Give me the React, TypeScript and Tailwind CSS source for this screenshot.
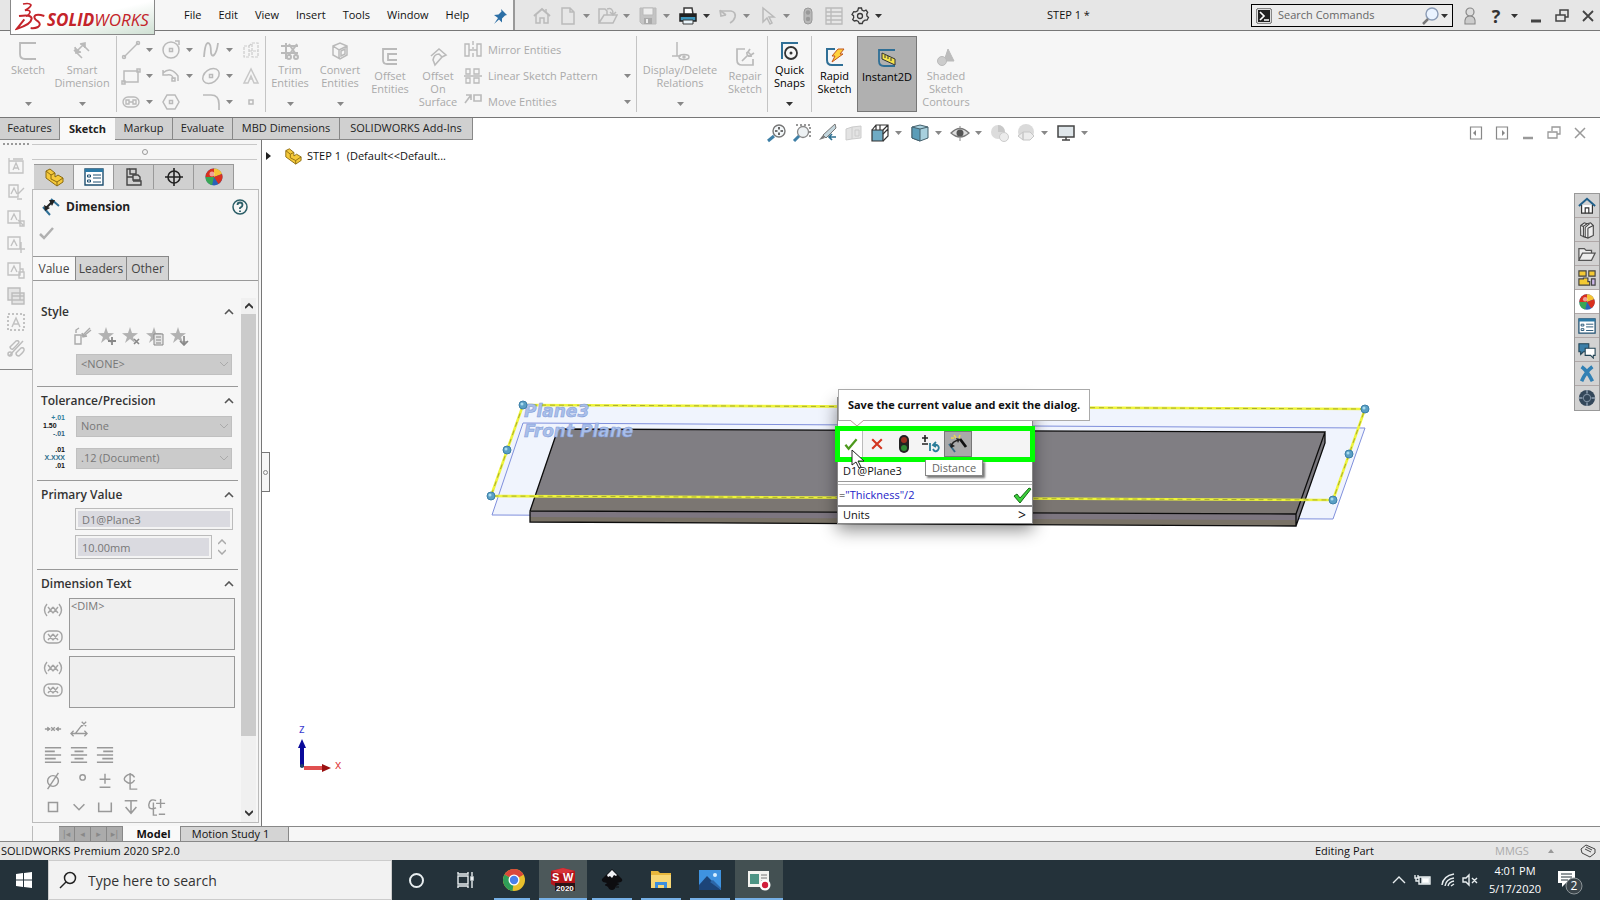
import type { ReactNode } from 'react'

const G = '#bababa'
const D = '#3a3a3a'
const B = '#2f6f96'

// every drawing sits on a 20x20 grid
const icons: Record<string, ReactNode> = {
  home: <g stroke={G} strokeWidth="1.5"><path d="M2 10 10 3l8 7" strokeWidth="2" /><path d="M4 9v8h4v-5h4v5h4V9M14 3v3" /></g>,
  newDoc: <path stroke={G} strokeWidth="1.5" d="M4 2h8l4 4v12H4zM12 2v4h4" />,
  open: <g stroke={G} strokeWidth="1.5"><path d="M1 17V3h6l2 2v4M1 17l5-8h13l-4 8z" /><path d="M9 3q6-2 6 5M12 6l3 3 3-3" /></g>,
  save: <g><path d="M2 2h16v16H4l-2-2z" fill="#c4c4c4" stroke={G} /><path d="M5 2h10v7H5z" fill="#eee" stroke={G} /><path d="M6 12h8v6H6z" fill="#aaa" /><path d="M8 13h2v4H8z" fill="#eee" /></g>,
  print: <g><path d="M6 8V2h8l1 6" stroke={D} strokeWidth="1.5" fill="#fff" /><path d="M2 8h16v7H2z" fill="#3c94ba" stroke="#202020" strokeWidth="1.5" /><path d="M2 8h16v3H2z" fill="#222" /><path d="M5 14h10v4H5z" fill="#e8f4fa" stroke={D} /></g>,
  undo: <g stroke={G} strokeWidth="1.7"><path d="M2 5h11q5 1 4 6-1 4-5 6" /><path d="M2 4l1 6 5-1M3 5l5 4" /></g>,
  cursor: <path stroke={G} strokeWidth="1.5" d="M5 2v14l4-4 3 6 2-1-3-6h5z" />,
  lights: <g><rect x="6" y="2" width="8" height="16" rx="4" fill="#b8b8b8" stroke="#999" /><circle cx="10" cy="6.500" r="2.200" fill="#999" /><circle cx="10" cy="13" r="2.200" fill="#999" /></g>,
  list: <path stroke={G} strokeWidth="1.300" d="M2 2h16v16H2zM7 2v16M2 6h16M2 10h16M2 14h16" />,
  gear: <g stroke={D} strokeWidth="1.300"><path d="M8.500 2h3l.5 2 2 1 2-1 1.700 2.400-1 1.800.3 2 1.500 1.300-1.500 2.700-2-.1-2 1.400-.7 2h-3l-1-2-2-1-2 .5L2.700 13.500l1-1.800-.2-2L2 8.500 3.700 5.700l2 .2 2-1.200z" /><circle cx="10" cy="10" r="2.500" /></g>,
  terminal: <g><path d="M3 3h14v14H3z" fill="#222" stroke="#222" /><path d="M3.500 3.500h13v13h-13z" stroke="#ddd" /><path d="M6 6l4 4-4 4M10 14h5" stroke="#fff" strokeWidth="1.700" /></g>,
  search: <g><circle cx="12" cy="8" r="6" fill="#eaf3ff" stroke="#8a9bb5" strokeWidth="1.400" /><path d="M8 13l-5 5" stroke="#777" strokeWidth="2.500" /></g>,
  user: <g stroke="#888" strokeWidth="1.200"><circle cx="10" cy="6" r="4" fill="#ddd" /><path d="M5 18q-1-8 5-8t5 8z" fill="#ccc" /></g>,
  min: <path d="M5 15h10" stroke="#444" strokeWidth="3" />,
  restore: <g stroke="#444" strokeWidth="1.500"><path d="M4 9h9v6H4zM8 9V4h8v7h-3" /></g>,
  close: <path d="M5 5l10 10M15 5 5 15" stroke="#444" strokeWidth="1.800" />,
  gMin: <path d="M5 15h10" stroke="#999" strokeWidth="2.500" />,
  gRestore: <path d="M4 9h9v6H4zM8 8V4h8v7h-3" stroke="#999" strokeWidth="1.300" />,
  gClose: <path d="M5 5l10 10M15 5 5 15" stroke="#999" strokeWidth="1.500" />,
  paneL: <g><path d="M4.500 4h11v12h-11z" stroke="#888" strokeWidth="1.200" /><path d="M10 7v6L7 10z" fill="#888" /></g>,
  paneR: <g><path d="M4.500 4h11v12h-11z" stroke="#888" strokeWidth="1.200" /><path d="M10 7v6l3-3z" fill="#888" /></g>,
  pin: <path d="M11 3l6 6-2 .5-3 3 0 4-3-3L4 18l4-6-4-3 4.500-.5 3-3z" fill="#2c6fa6" />,

  // sketch ribbon
  sketch: <path stroke={G} strokeWidth="1.800" d="M18 2H2v11q0 5 5 5h11" />,
  smartDim: <g stroke={G} strokeWidth="1.600"><path d="M2 9l8 8M10 3l7 7M4 11l8-8" /><path d="M3 6l1 6 5-1M8 3l5-1 0 5" fill={G} /></g>,
  line: <g stroke={G} strokeWidth="1.500"><path d="M3 17 17 3" /><circle cx="3" cy="17" r="1.500" /><circle cx="17" cy="3" r="1.500" /></g>,
  rect: <path stroke={G} strokeWidth="1.500" d="M3 5h14v11H3zM1 15h3v3H1zM16 3h3v3h-3z" />,
  slot: <g stroke={G} strokeWidth="1.400"><rect x="2" y="5" width="16" height="10" rx="5" /><path d="M5 8h3v4H5zM12 8h3v4h-3zM8 10h4" /></g>,
  circle: <g stroke={G} strokeWidth="1.500"><circle cx="10" cy="10" r="8" /><path d="M8.500 8.500h3v3h-3zM14 1h4v4" /></g>,
  arc: <g stroke={G} strokeWidth="1.500"><path d="M2 7q8-7 15 3v5M2 4v5h5M6 9q6-1 6 4" /><path d="M11 12h3v3h-3z" /></g>,
  polygon: <g stroke={G} strokeWidth="1.500"><path d="M6 3h8l4 7-4 7H6l-4-7z" /><path d="M8.500 8.500h3v3h-3z" /></g>,
  spline: <path stroke={G} strokeWidth="1.800" d="M3 17Q4 3 7 3t3 10q1 4 3 2 3-3 4-12" />,
  ellipse: <g stroke={G} strokeWidth="1.500"><ellipse cx="10" cy="10" rx="9" ry="6.500" transform="rotate(-35 10 10)" /><path d="M8.500 8.500h3v3h-3z" /></g>,
  fillet: <path stroke={G} strokeWidth="1.700" d="M2 3h8q8 0 8 9v6" />,
  mirrorBox: <path stroke="#ccc" strokeWidth="1.200" strokeDasharray="3 1" d="M3 6h5v11H3zM11 3h6v14h-6zM8 6l3-3M8 11h9" />,
  text: <path stroke="#c8c8c8" strokeWidth="1.500" d="M10 3 3 17h4l3-7 3 7h4zM8 13h4" />,
  point: <path stroke={G} strokeWidth="1.500" d="M8 8h4v4H8z" />,
  trim: <g stroke={G} strokeWidth="2"><path d="M6 2v16M1 5h17M1 12h17" /><path d="M9 3l8 12M17 3 9 14" /><circle cx="9" cy="16" r="2" /><circle cx="16" cy="16" r="2" /></g>,
  convert: <g stroke={G} strokeWidth="1.500"><path d="M3 5l7-3 7 3v9l-7 4-7-4zM3 5l6 4v9M9 9l8-4" /><path d="M11 10l4-2v5l-4 2z" /></g>,
  offset: <path stroke={G} strokeWidth="1.800" d="M17 2H3v11q0 4 4 4h10M17 7H8v6h9" />,
  offsetSurf: <g stroke={G} strokeWidth="1.600"><path d="M3 9l8-7 7 6-4 2M5 13q1-6 6-6l3 3-7 8q-1-3-2-5z" /></g>,
  mirror: <g stroke={G} strokeWidth="1.400"><path d="M10 1v18" strokeDasharray="4 2" /><path d="M2 4h4v12H2zM18 4h-4v12h4zM6 10h3M11 10h3" /></g>,
  pattern: <path stroke={G} strokeWidth="1.300" d="M3 3h4v5H3zM11 3h5v5h-5zM3 12h4v5H3zM11 12h5v5h-5zM1 10h18" />,
  move: <g stroke={G} strokeWidth="1.600"><path d="M2 11l6-8M3 3h5v5M11 3h7v6h-7z" /></g>,
  relations: <g stroke={G} strokeWidth="1.500"><path d="M7 1v14M2 15h9" /><ellipse cx="14" cy="16" rx="5" ry="2.500" /><circle cx="14" cy="16" r="1" /></g>,
  repair: <g stroke={G} strokeWidth="1.700"><path d="M10 2H2v11q0 5 5 5h11v-6" /><path d="M7 14l6-6M12 5q-1 5 5 4M15 2l-2 3 3 3 3-2" /></g>,
  snaps: <g strokeWidth="1.800"><path d="M2 18V2h16" stroke={B} strokeWidth="2" /><circle cx="11" cy="12" r="6" stroke="#333" /><circle cx="11" cy="12" r="1.500" fill="#333" /></g>,
  rapid: <g><path d="M10 2H2v11q0 5 5 5h11" stroke={B} strokeWidth="2" /><path d="M13 2h6l-4 5h3L7 15l3-6H7z" fill="#ffd23c" stroke="#c2541c" /></g>,
  instant: <g><path d="M18 2H2v11q0 5 5 5h11" stroke={B} strokeWidth="1.800" /><path d="M5 5l13 6v6L5 11z" fill="#f3e24a" stroke="#333" /><path d="M8 7v3M11 8v3M14 10v3" stroke="#333" /></g>,
  shaded: <g fill="#bcbcbc" stroke={G}><path d="M12 2l6 12H8z" /><circle cx="6" cy="14" r="4.500" fill="#ccc" /></g>,

  // view toolbar
  zoomFit: <g><circle cx="13" cy="8" r="6" fill="#f4f8fa" stroke="#777" strokeWidth="1.400" /><path d="M13 4v8M9 8h8" stroke="#444" strokeDasharray="2.500 3" strokeWidth="1.600" /><path d="M8 13l-6 5" stroke="#3e7fa6" strokeWidth="3" /></g>,
  zoomArea: <g><path d="M4 2h14v12" stroke="#333" strokeDasharray="2 2" /><circle cx="11" cy="9" r="5.500" fill="#eef2f4" stroke="#888" strokeWidth="1.300" /><path d="M7 13l-5 5" stroke="#3e7fa6" strokeWidth="3" /></g>,
  prevView: <g><path d="M17 1 5 12l3 3 10-10z" fill="#c3d5dc" stroke="#777" /><path d="M5 12l-4 5 6-2z" fill="#777" /><path d="M18 14h-7M14 11l-3 3 3 3" stroke="#2f7090" strokeWidth="1.700" /></g>,
  section: <path d="M2 6l6-2v12l-6 1zM8 4l9-1v12l-9 1M11 7h4v6h-4z" fill="#e3e3e3" stroke="#ccc" />,
  orient: <g stroke="#333" strokeWidth="1.200"><path d="M2 7h11v11H2z" fill="#6fabc4" /><path d="M2 7l4-5h12v11l-5 5M13 7l5-5M6 2v5M10 2v5M13 11l5-5" /></g>,
  display: <g stroke="#44606c"><path d="M2 4l8-2 8 2v11l-8 3-8-3z" fill="#a8d0de" /><path d="M2 4l8 2v12l-8-3z" fill="#5b9db8" /><path d="M10 6l8-2" /></g>,
  eye: <g><path d="M1 10q9-9 18 0-9 8-18 0z" fill="#ddd" stroke="#777" strokeWidth="1.300" /><circle cx="10" cy="10" r="3.500" fill="#555" /><path d="M10 3v3M10 15v3" stroke="#888" /></g>,
  appearance: <g><circle cx="8" cy="9" r="7" fill="#dcdcdc" /><path d="M8 2a7 7 0 0 1 7 7H8z" fill="#c8c8c8" /><circle cx="14" cy="14" r="4.500" fill="#ececec" stroke="#ccc" /></g>,
  scene: <g><circle cx="10" cy="9" r="8" fill="#dadada" /><path d="M2 13l5-4v8zM7 9h7l4 4-4 4H7z" fill="#ececec" stroke="#c6c6c6" /></g>,
  monitor: <g><path d="M2 3h16v11H2z" fill="#dfe6ea" stroke="#444" strokeWidth="1.500" /><path d="M10 14v3M6 17h8" stroke="#444" strokeWidth="1.500" /></g>,

  // manager tabs
  part: <g stroke="#8a6a10"><path d="M2 4l4-2 5 4v4l3-2 5 3v4l-6 4L2 11z" fill="#f5c93a" /><path d="M2 4l5 4v4l6 3v4M7 8l4-2M13 15l6-4" /></g>,
  props: <g><path d="M1 2h18v16H1z" fill="#fff" stroke="#1e4f70" strokeWidth="1.400" /><path d="M1 2h18v3H1z" fill="#2c7aa6" /><path d="M3.500 8h3v2h-3zM3.500 13h3v2h-3z" stroke="#1e4f70" /><path d="M9 8h8M9 11h8M9 15h8" stroke="#1e4f70" /></g>,
  config: <g stroke="#444" strokeWidth="1.400"><path d="M6 2H3v16h3M3 10h6" /><path d="M6 2h6v5H6z" /><path d="M9 8h5l2 2v3H9z" /><path d="M9 14h8v4H6" /></g>,
  target: <g stroke="#222" strokeWidth="1.600"><circle cx="10" cy="10" r="6" /><path d="M10 1v18M1 10h18" /></g>,
  ball: <g><circle cx="10" cy="10" r="8.500" fill="#2a62b8" /><path d="M10 10V1.500A8.500 8.500 0 0 0 1.500 10z" fill="#d9301f" /><path d="M10 10V1.500q6 0 8 5.500z" fill="#f6c235" /><path d="M10 10H1.500a8.500 8.500 0 0 0 6.500 8.200z" fill="#3aa655" /><path d="M10 10l8-3a8.500 8.500 0 0 1-3.500 10z" fill="#d9301f" /><circle cx="8" cy="7" r="2.500" fill="#fff" opacity=".55" /></g>,
  dim: <g><path d="M2 10l7 8M10 2l8 7" stroke={B} strokeWidth="2" /><path d="M4 12l8-8" stroke="#222" strokeWidth="2" /><path d="M3 8l1 6 5-3zM8 3h6l-3 6z" fill="#222" /></g>,
  help: <g><circle cx="10" cy="10" r="7" stroke="#2c5f68" strokeWidth="1.500" /><path d="M7.500 8q0-2.500 2.500-2.500T12.500 8q0 1.500-2.500 3v1M10 13.500v1.500" stroke="#2c5f68" strokeWidth="1.800" /></g>,
  gCheck: <path d="M3 10l4 4 9-10" stroke="#b0b0b0" strokeWidth="2.500" />,

  // style row
  applyDef: <g stroke="#aaa" strokeWidth="1.400"><path d="M2 9h6v9H2zM3 7V4l3-2M9 10l8-8M12 9l6-5" /><path d="M9 7l1 4 4-1" fill="#aaa" /></g>,
  starAdd: <g fill="#b2b2b2"><path d="M9 1l2 6 6 .3-5 3.700 2 6-5-4-5 4 2-6-5-3.700L7 7z" /><path d="M15 11v8M11 15h8" stroke="#888" strokeWidth="1.800" /></g>,
  starDel: <g fill="#b2b2b2"><path d="M9 1l2 6 6 .3-5 3.700 2 6-5-4-5 4 2-6-5-3.700L7 7z" /><path d="M13 13l5 5M18 13l-5 5" stroke="#888" strokeWidth="1.600" /></g>,
  starSave: <g fill="#b2b2b2"><path d="M9 1l2 6 6 .3-5 3.700 2 6-5-4-5 4 2-6-5-3.700L7 7z" /><path d="M9 8h9v11H9zM11 11h5M11 14h5M11 17h5" fill="#e5e5e5" stroke="#888" /></g>,
  starLoad: <g fill="#b2b2b2"><path d="M9 1l2 6 6 .3-5 3.700 2 6-5-4-5 4 2-6-5-3.700L7 7z" /><path d="M15 10v8M11 15l4 4 4-4" stroke="#888" strokeWidth="1.600" /></g>,
  paren: <path d="M4 4Q-1 10 4 16M16 4q5 6 0 12M5 7l5 6M10 7l-5 6M10 7l5 6M15 7l-5 6" stroke="#a4a4a4" strokeWidth="1.400" />,
  boxed: <g stroke="#a4a4a4" strokeWidth="1.400"><rect x="1" y="4" width="18" height="12" rx="5" /><path d="M5 7l5 6M10 7l-5 6M10 7l5 6M15 7l-5 6" /></g>,
  centreDim: <g stroke="#999" strokeWidth="1.500"><path d="M1 10h5M19 10h-5M8 8l4 4M12 8l-4 4" /><path d="M4 8l3 2-3 2zM16 8l-3 2 3 2z" fill="#999" strokeWidth="1" /></g>,
  leaderDim: <path d="M1 15h18M4 12l-3 3 3 3M16 12l3 3-3 3M6 15l7-9M13 2l5 5M18 2l-5 5" stroke="#999" strokeWidth="1.400" />,
  alignL: <path d="M1 2h18M1 6h11M1 10h18M1 14h12M1 18h18" stroke="#999" strokeWidth="1.800" />,
  alignC: <path d="M1 2h18M5 6h10M1 10h18M5 14h10M1 18h18" stroke="#999" strokeWidth="1.800" />,
  alignR: <path d="M1 2h18M8 6h11M1 10h18M7 14h12M1 18h18" stroke="#999" strokeWidth="1.800" />,
  dia: <g stroke="#999" strokeWidth="1.600"><circle cx="10" cy="10" r="6" /><path d="M4 19 16 1" /></g>,
  degree: <circle cx="14" cy="6" r="3" stroke="#999" strokeWidth="1.600" />,
  plusMinus: <path d="M10 2v11M4 8h12M4 17h12" stroke="#999" strokeWidth="1.600" />,
  centreLine: <g stroke="#999" strokeWidth="1.600"><path d="M14 6Q10 0 5 4t0 7q5 4 9-2M9 1v18h8" /></g>,
  square: <path d="M5 5h10v10H5z" stroke="#999" strokeWidth="1.700" />,
  sink: <path d="M4 7l6 6 6-6" stroke="#999" strokeWidth="1.700" />,
  bore: <path d="M3 5v10h14V5" stroke="#999" strokeWidth="1.700" />,
  depth: <path d="M3 3h14M10 3v14M4 10l6 7 6-7" stroke="#999" strokeWidth="1.700" />,
  more: <path d="M9 3Q2 0 1 7t8 4M6 5v14h4M14 1v10M9 6h10M12 18h7" stroke="#999" strokeWidth="1.600" />,

  // left rail
  note1: <path d="M3 5h14v12H3zM3 2v3M7 3h10M7 14l3-7 3 7M8 12h4" stroke="#c2c2c2" strokeWidth="1.300" />,
  note2: <path d="M3 3h9v12H3zM12 12l6-6M5 12l3-6 3 6M11 17h5" stroke="#c2c2c2" strokeWidth="1.400" />,
  note3: <path d="M2 3h12v12H2zM5 12l3-6 3 6M14 13h4v5h-4zM12 12l5 5" stroke="#c2c2c2" strokeWidth="1.400" />,
  note4: <path d="M2 3h12v12H2zM5 12l3-6 3 6M15 8v11M11 15h8" stroke="#c2c2c2" strokeWidth="1.400" />,
  note5: <path d="M2 3h12v12H2zM5 12l3-6 3 6M13 12h5v6h-5zM14 12v-3h3v3" stroke="#c2c2c2" strokeWidth="1.400" />,
  note6: <path d="M2 2h12v12H2zM6 7h12v11H6zM6 10h12M6 14h12" stroke="#bdbdbd" strokeWidth="1.400" fill="#e4e4e4" />,
  note7: <g stroke="#c2c2c2" strokeWidth="1.500"><path d="M2 2h16v16H2z" strokeDasharray="2 2" strokeWidth="2" /><path d="M6 15l4-9 4 9M8 12h5" /></g>,
  note8: <g stroke="#bdbdbd" strokeWidth="1.500"><path d="M4 9l6-6q2-1 3 1 0 1-6 7-2 1-3-2z" /><path d="M10 15l5-5q2-1 3 1t-5 7q-3 0-3-3zM3 18 17 3" /><circle cx="4" cy="16" r="2" /></g>,

  // task pane
  tpHome: <g><path d="M4 9v9h12V9" fill="#fff" stroke="#333" strokeWidth="1.300" /><path d="M8 18v-6h4v6" stroke="#333" strokeWidth="1.300" /><path d="M1 10l9-8 9 8" stroke="#1f5f8a" strokeWidth="2.200" /></g>,
  tpLib: <g stroke="#444" strokeWidth="1.200" fill="#eee"><path d="M3 5l4-3 3 1 4-1 3 3v11l-6 3-8-3z" /><path d="M3 5l3 1v12M6 6l4-3M8 7l5-4M8 7v12M11 8l6-3M11 8v11" /></g>,
  tpFolder: <path d="M1 17V4h6l2 2h6v3M1 17l4-8h14l-4 8z" stroke="#555" strokeWidth="1.400" fill="#eee" />,
  tpView: <g stroke="#444" strokeWidth="1.300"><path d="M1 2h8v6H1zM12 2h7v6h-7zM1 11h5v-1h5v4h2v4H1z" fill="#f3c933" /><path d="M15 11h4v7h-4z" fill="#cbb6e8" /></g>,
  tpForum: <g strokeWidth="1.200"><path d="M1 3h11v9H6l-3 3v-3H1z" fill="#3c7fa8" stroke="#245" /><path d="M8 8h11v8h-2v3l-3-3H8z" fill="#fff" stroke="#245" /></g>,
  tpX: <path d="M4 2q6 4 12 16M16 2Q9 7 4 18" stroke="#3180b4" strokeWidth="4" />,
  tpGlobe: <g><circle cx="10" cy="10" r="9" fill="#33475a" /><circle cx="10" cy="10" r="4" stroke="#7a8c9e" strokeWidth="1.200" /><path d="M10 1v4M10 15v4M1 10h4M15 10h4" stroke="#7a8c9e" strokeWidth="2" /></g>,

  // modify box
  okGreen: <path d="M3 11l4 5 10-12" stroke="#4e9a1e" strokeWidth="2.800" />,
  okBright: <path d="M2 11l3-2 3 4 9-10 2 1L8 18z" fill="#3bd03b" stroke="#156b15" />,
  cross: <path d="M4 4l12 12M16 4 4 16" stroke="#d23620" strokeWidth="2.600" />,
  traffic: <g><rect x="5" y="1" width="10" height="18" rx="5" fill="#222" /><circle cx="10" cy="6" r="3" fill="#9c3020" /><circle cx="10" cy="14" r="3" fill="#2f8a34" /></g>,
  spinInc: <g><path d="M4 1v7M1 4h6M1 10h6" stroke="#222" strokeWidth="1.600" /><path d="M9 9v8M12 11h4q3 2 1 5-3 3-5-1M15 8l-3 3 3 2" stroke="#2b7d99" strokeWidth="1.800" /></g>,
  distance: <g><path d="M1 10l6 8" stroke="#3a6b86" strokeWidth="1.800" /><path d="M3 13q1-6 8-7" stroke="#222" strokeWidth="1.600" /><path d="M12 5l6 8" stroke="#111" strokeWidth="2.800" /><path d="M2 9l1 5 4-2zM8 4l4 1-2 4z" fill="#222" /><path d="M6 1l2 3M12 1l-1 3M3 4h3" stroke="#e8d35a" strokeWidth="1.500" /></g>,
}

function Icon({ name, className = 'w-5 h-5' }: { name: string; className?: string }) {
  return (
    <svg className={`shrink-0 ${className}`} viewBox="0 0 20 20" fill="none" aria-hidden="true">
      {icons[name]}
    </svg>
  )
}

function Caret({ dark = false }: { dark?: boolean }) {
  return (
    <svg className="w-[7px] h-1 shrink-0" viewBox="0 0 7 4" aria-hidden="true">
      <path d="M0 0h7L3.500 4z" fill={dark ? '#333' : '#888'} />
    </svg>
  )
}

function BarButton({ name, label, caret = false, dark = false }: { name: string; label: string; caret?: boolean; dark?: boolean }) {
  return (
    <button aria-label={label} className={`h-5 shrink-0 flex items-center gap-[5px] ${caret ? 'w-10' : 'w-[26px]'}`}>
      <Icon name={name} />
      {caret && <Caret dark={dark} />}
    </button>
  )
}

function TitleBar() {
  return (
    <header className="h-[31px] shrink-0 flex bg-[#e6e6e6] border-b border-[#777] relative z-20">
      <div className="w-[10px]" />
      <div className="w-[145px] h-[35px] shrink-0 flex items-center bg-gradient-to-br from-white via-white to-[#cfe0d3] border border-t-0 border-[#888] pl-1">
        <svg className="w-[30px] h-[30px] shrink-0" viewBox="0 0 90 90" fill="none" stroke="#c4242a" strokeWidth="5" aria-hidden="true">
          {/* top stroke, then the slanted D and the S */}
          <path d="M24 6q20-4 24 3-2 8-18 16 16-2 15 6-2 8-12 12" />
          <path d="M12 42q38-6 38 8-2 18-44 30l22-28" strokeWidth="6" />
          <path d="M88 42q-26-8-30 2 0 7 12 15 9 9-1 16-10 5-22 3" strokeWidth="6" />
        </svg>
        <span className="text-[17px] leading-5 italic text-[#c4242a] pl-[2px] pt-[5px] whitespace-nowrap">
          <b>SOLID</b>WORKS
        </span>
      </div>
      <nav className="w-[360px] shrink-0 flex items-center bg-[#f6f6f6] border-r-2 border-[#999] pl-[29px] pt-px gap-[17px] text-[11px]">
        {['File', 'Edit', 'View', 'Insert', 'Tools', 'Window', 'Help'].map((m) => (
          <button key={m}>{m}</button>
        ))}
        <button aria-label="Pin menu" className="ml-1"><Icon name="pin" /></button>
      </nav>
      <div className="flex items-center pl-[17px] pt-px">
        <BarButton name="home" label="Home" />
        <BarButton name="newDoc" label="New" caret />
        <BarButton name="open" label="Open" caret />
        <BarButton name="save" label="Save" caret />
        <BarButton name="print" label="Print" caret dark />
        <BarButton name="undo" label="Undo" caret />
        <BarButton name="cursor" label="Select" caret />
        <BarButton name="lights" label="Rebuild" />
        <BarButton name="list" label="File properties" />
        <BarButton name="gear" label="Options" caret dark />
      </div>
      <div className="flex-1 self-center text-center text-[11px] pt-px pr-1">STEP 1 *</div>
      <div className="w-[202px] h-[23px] mt-1 flex items-center border border-black bg-[#ececec] pl-[2px] pr-1">
        <Icon name="terminal" />
        <input aria-label="Search Commands" placeholder="Search Commands" className="flex-1 min-w-0 ml-1 text-[11px] bg-transparent placeholder:text-[#666] outline-none" />
        <Icon name="search" />
        <div className="ml-px"><Caret dark /></div>
      </div>
      <div className="flex items-center pl-[7px] pr-[2px] pt-px">
        <BarButton name="user" label="Log in" />
        <button aria-label="Help" className="w-10 flex items-center gap-[5px]">
          <span className="w-5 text-center text-[18px] leading-5 font-bold text-[#333]">?</span>
          <Caret dark />
        </button>
        <BarButton name="min" label="Minimize" />
        <BarButton name="restore" label="Restore" />
        <button aria-label="Close" className="w-5 h-5"><Icon name="close" /></button>
      </div>
    </header>
  )
}

type RibbonProps = { name: string; lines: string[]; width: string; low?: boolean; caret?: boolean; on?: boolean; active?: boolean }

function RibbonButton({ name, lines, width, low, caret, on, active }: RibbonProps) {
  const top = active ? 'pt-[11px] my-[5px] bg-[#b0b0b0] border border-[#777]' : low ? 'pt-4' : 'pt-[10px]'
  return (
    <button className={`${width} shrink-0 flex flex-col items-center text-[11px] leading-[13px] pb-[11px] ${top} ${on ? 'text-black' : 'text-[#aaa]'}`}>
      <Icon name={name} />
      <span className="mt-[2px] flex flex-col items-center whitespace-nowrap">
        {lines.map((l) => <span key={l}>{l}</span>)}
      </span>
      {caret && <span className="mt-auto"><Caret dark={on} /></span>}
    </button>
  )
}

function Sep() {
  return <div className="w-px shrink-0 bg-[#c4c4c4] my-[5px]" />
}

const sketchTools: [string, string, boolean][] = [
  ['line', 'Line', true], ['circle', 'Circle', true], ['spline', 'Spline', true], ['mirrorBox', 'Plane', false],
  ['rect', 'Rectangle', true], ['arc', 'Arc', true], ['ellipse', 'Ellipse', true], ['text', 'Text', false],
  ['slot', 'Slot', true], ['polygon', 'Polygon', false], ['fillet', 'Fillet', true], ['point', 'Point', false],
]

function Ribbon() {
  return (
    <div className="h-[87px] shrink-0 flex bg-[#f6f6f6] border-b border-[#777]">
      <RibbonButton name="sketch" lines={['Sketch']} width="w-14" caret />
      <RibbonButton name="smartDim" lines={['Smart', 'Dimension']} width="w-[52px] mr-2" caret />
      <Sep />
      <div className="grid grid-cols-[40px_40px_40px_24px] grid-rows-[26px_26px_26px] items-center pt-[6px] pl-1 content-start">
        {sketchTools.map(([name, label, caret]) => <BarButton key={name} name={name} label={label} caret={caret} />)}
      </div>
      <Sep />
      <RibbonButton name="trim" lines={['Trim', 'Entities']} width="w-12" caret />
      <RibbonButton name="convert" lines={['Convert', 'Entities']} width="w-[52px]" caret />
      <RibbonButton name="offset" lines={['Offset', 'Entities']} width="w-12" low />
      <RibbonButton name="offsetSurf" lines={['Offset', 'On', 'Surface']} width="w-12" low />
      <div className="w-[174px] shrink-0 pt-[6px] pl-px text-[11px] text-[#aaa]">
        {[['mirror', 'Mirror Entities', ''], ['pattern', 'Linear Sketch Pattern', 'y'], ['move', 'Move Entities', 'y']].map(([name, label, caret]) => (
          <button key={name} className="w-full h-[26px] flex items-center pr-[5px]">
            <Icon name={name} />
            <span className="ml-[5px] flex-1 text-left">{label}</span>
            {caret && <Caret />}
          </button>
        ))}
      </div>
      <Sep />
      <RibbonButton name="relations" lines={['Display/Delete', 'Relations']} width="w-[86px]" caret />
      <RibbonButton name="repair" lines={['Repair', 'Sketch']} width="w-11" low />
      <Sep />
      <RibbonButton name="snaps" lines={['Quick', 'Snaps']} width="w-[43px]" caret on />
      <Sep />
      <RibbonButton name="rapid" lines={['Rapid', 'Sketch']} width="w-[45px]" low on />
      <RibbonButton name="instant" lines={['Instant2D']} width="w-[60px]" low on active />
      <RibbonButton name="shaded" lines={['Shaded', 'Sketch', 'Contours']} width="w-[58px]" low />
    </div>
  )
}

function CommandTabs() {
  const tabs: [string, string][] = [
    ['Features', 'w-[60px]'], ['Sketch', 'w-[55px]'], ['Markup', 'w-[58px]'],
    ['Evaluate', 'w-[60px]'], ['MBD Dimensions', 'w-[107px]'], ['SOLIDWORKS Add-Ins', 'w-[133px]'],
  ]
  return (
    <nav className="w-[473px] h-[22px] flex relative z-10 text-[11px] whitespace-nowrap">
      {tabs.map(([t, w]) => (
        <button
          key={t}
          className={`${w} shrink-0 flex items-center justify-center ${t === 'Sketch' ? 'font-bold bg-[#f9f9f9]' : 'bg-[#d0d0d0] border-r border-b border-[#888]'} text-[#222]`}
        >
          {t}
        </button>
      ))}
    </nav>
  )
}

function Section({ title, children, first = false }: { title: string; children: ReactNode; first?: boolean }) {
  return (
    <section className={first ? '' : 'border-t border-[#999] pt-1'}>
      <div className="h-5 flex items-center justify-between pl-1 pr-1">
        <h3 className="text-[12px] font-semibold text-[#333]">{title}</h3>
        <svg className="w-[10px] h-[6px]" viewBox="0 0 10 6" fill="none" aria-hidden="true"><path d="M1 5l4-4 4 4" stroke="#555" strokeWidth="1.600" /></svg>
      </div>
      <div className="pt-1 pb-[11px]">{children}</div>
    </section>
  )
}

function Combo({ label, value }: { label: string; value: string }) {
  return (
    <div className="relative w-[156px] ml-auto mr-[6px]">
      <select aria-label={label} className="appearance-none block w-full h-[21px] bg-[#cbcbcb] text-[11px] text-[#777] pl-1 border border-[#c0c0c0]">
        <option>{value}</option>
      </select>
      <svg className="absolute right-1 top-2 w-2 h-[5px]" viewBox="0 0 8 5" fill="none" aria-hidden="true"><path d="M0 0l4 4 4-4" stroke="#aaa" /></svg>
    </div>
  )
}

function IconRow({ names }: { names: string[] }) {
  return (
    <div className="h-[26px] flex items-center gap-[6px] pl-[6px]">
      {names.map((n) => <button key={n} aria-label={n} className="w-5 h-5 p-px"><Icon name={n} className="w-[18px] h-[18px]" /></button>)}
    </div>
  )
}

function DimTextBox({ label, value, tight = false }: { label: string; value: string; tight?: boolean }) {
  return (
    <div className="flex gap-[6px] pl-[6px] mb-[6px]">
      <div className={`flex flex-col w-5 pt-[2px] ${tight ? 'gap-[2px]' : 'gap-[7px]'}`}>
        <Icon name="paren" />
        <Icon name="boxed" />
      </div>
      <textarea aria-label={label} defaultValue={value} className="w-[166px] h-[52px] resize-none border border-[#999] bg-[#efefef] text-[11px] leading-[13px] text-[#777] px-px block outline-none" />
    </div>
  )
}

const tolText = "w-7 pl-[6px] text-[7px] leading-[8px] font-bold text-right font-['Liberation_Sans',sans-serif]"

function PropertyPanel() {
  const field = 'block pl-1 text-[11px] text-[#777] bg-[#dadae0] border-2 border-[#f4f4f4] outline outline-1 outline-[#bbb]'
  return (
    <aside className="w-[229px] shrink-0 flex flex-col bg-[#f6f6f6]">
      <div className="mt-1 h-4 mr-1 border-y border-[#c8c8c8] flex items-center justify-center shrink-0">
        <span className="w-[6px] h-[6px] rounded-full border border-[#999]" />
      </div>
      <div className="mt-1 h-[25px] flex pl-[2px] shrink-0">
        {['part', 'props', 'config', 'target', 'ball'].map((n) => (
          <button
            key={n}
            aria-label={n}
            className={`w-10 flex items-center justify-center border-r border-t border-[#999] ${n === 'props' ? '' : 'bg-[#d0d0d0]'}`}
          >
            <Icon name={n} />
          </button>
        ))}
      </div>
      <div className="flex-1 min-h-0 flex flex-col border border-[#bbb] mr-[2px]">
        <div className="h-[34px] shrink-0 flex items-center pl-2 pr-2">
          <Icon name="dim" />
          <h2 className="flex-1 ml-[5px] text-[12px] font-bold text-[#222]">Dimension</h2>
          <button aria-label="Help"><Icon name="help" /></button>
        </div>
        <div className="h-5 shrink-0 pl-1"><button aria-label="OK" className="block"><Icon name="gCheck" /></button></div>
        <div className="mt-3 h-[25px] shrink-0 flex border-b border-[#999] text-[12px] text-[#444]">
          <button className="w-[42px] border-t border-[#999] bg-[#f9f9f9]">Value</button>
          <button className="w-[52px] border-x border-t border-[#888] bg-[#d4d4d4]">Leaders</button>
          <button className="w-[42px] border-r border-t border-[#888] bg-[#d4d4d4]">Other</button>
        </div>
        <div className="flex-1 min-h-0 flex pt-[17px]">
          <div className="w-[201px] ml-1 pt-1 overflow-hidden">
            <Section title="Style" first>
              <div className="h-5 flex items-center gap-1 pl-9 mb-2">
                {['applyDef', 'starAdd', 'starDel', 'starSave', 'starLoad'].map((n) => (
                  <button key={n} aria-label={n}><Icon name={n} /></button>
                ))}
              </div>
              <Combo label="Dimension style" value="<NONE>" />
            </Section>
            <Section title="Tolerance/Precision">
              <div className="flex items-center h-[22px] mb-[10px]">
                <div className={tolText}>
                  <div className="text-[#2f7f9c]">+.01</div>
                  <div className="text-left">1.50</div>
                  <div className="text-[#2f5f7c]">-.01</div>
                </div>
                <Combo label="Tolerance type" value="None" />
              </div>
              <div className="flex items-center h-[22px]">
                <div className={tolText}>
                  <div>.01</div>
                  <div className="text-[#2f6f8c]">X.XXX</div>
                  <div>.01</div>
                </div>
                <Combo label="Unit precision" value=".12 (Document)" />
              </div>
            </Section>
            <Section title="Primary Value">
              <input aria-label="Dimension name" defaultValue="D1@Plane3" className={`${field} w-[156px] h-5 ml-[39px] mb-[7px]`} />
              <div className="flex items-center ml-[39px]">
                <input aria-label="Dimension value" defaultValue="10.00mm" className={`${field} w-[135px] h-[22px]`} />
                <svg className="w-2 h-4 ml-[7px]" viewBox="0 0 8 16" fill="none" aria-hidden="true"><path d="M0 5l4-4 4 4M0 11l4 4 4-4" stroke="#aaa" strokeWidth="1.500" /></svg>
              </div>
            </Section>
            <Section title="Dimension Text">
              <DimTextBox label="Dimension text" value="<DIM>" />
              <DimTextBox label="Dimension text below" value="" tight />
              <div className="pt-[2px]">
                <IconRow names={['centreDim', 'leaderDim']} />
                <IconRow names={['alignL', 'alignC', 'alignR']} />
                <IconRow names={['dia', 'degree', 'plusMinus', 'centreLine']} />
                <IconRow names={['square', 'sink', 'bore', 'depth', 'more']} />
              </div>
            </Section>
          </div>
          <div className="w-[15px] ml-[3px] flex flex-col items-center bg-[#f0f0f0]">
            <svg className="w-2 h-4 shrink-0" viewBox="0 0 8 16" fill="none" aria-hidden="true"><path d="M0 10l4-4 4 4" stroke="#333" strokeWidth="1.800" /></svg>
            <div className="w-full h-[422px] bg-[#cbcbcb]" />
            <svg className="w-2 h-4 mt-auto shrink-0" viewBox="0 0 8 16" fill="none" aria-hidden="true"><path d="M0 5l4 4 4-4" stroke="#333" strokeWidth="1.800" /></svg>
          </div>
        </div>
      </div>
      <div className="h-[3px] shrink-0" />
    </aside>
  )
}

function Scene() {
  const handles = [[261, 287], [1103, 291], [245, 332], [1087, 336], [229, 378], [1071, 382]]
  return (
    <svg className="absolute inset-0 w-full h-full" fill="none" aria-label="Model view">
      <path d="M261 305 1103 310 1071 401 230 397zM261 287 1103 291 1071 382 229 378z" fill="#f0f4fd" />
      <path d="M261 305 1103 310 1071 401 230 397z" stroke="#7f8fdc" />
      <path d="M296 311 1063 314 1034 396 268 393z" fill="#807e83" />
      <path d="M273 379 1040 382 1034 396 268 393z" fill="#7b7672" />
      <path d="M268 393 1034 396v12l-766-4z" fill="#7d7680" />
      <path d="M268 399 1034 402v6l-766-4z" fill="#797266" />
      <path d="M1063 314v11l-29 83v-12z" fill="#77757b" />
      <g stroke="#0c0c0c" strokeWidth="1.300">
        <path d="M296 311 1063 314 1034 396 268 393zM268 393v11l766 4v-12M1034 408l29-83v-11" />
      </g>
      <path d="M261 287 1103 291 1071 382 229 378z" stroke="#eef43c" strokeWidth="2.600" />
      <path d="M261 287 1103 291 1071 382 229 378z" stroke="#a9ac2c" strokeWidth="1" strokeDasharray="5 4" />
      <g fontFamily="DejaVu Sans" fontSize="17" fontWeight="bold" fontStyle="italic" fill="#a9bfe9" stroke="#7f99d8" strokeWidth=".5">
        <text x="262" y="299">Plane3</text>
        <text x="262" y="319">Front Plane</text>
      </g>
      {handles.map(([x, y]) => (
        <g key={`${x}-${y}`}>
          <circle cx={x} cy={y} r="4" fill="#5a9fc4" stroke="#3c80a8" />
          <circle cx={x - 1} cy={y - 1} r="1.500" fill="#a8dcf0" />
        </g>
      ))}
      {/* triad */}
      <path d="M40 649v-22" stroke="#0a0a9a" strokeWidth="4" />
      <path d="M40 621l4 9h-8z" fill="#0a0a9a" />
      <path d="M42 650h20" stroke="#e05050" strokeWidth="4" />
      <path d="M69 650l-9-4v8z" fill="#9a1010" />
      <circle cx="40" cy="648" r="2" fill="#246" />
      <g fontFamily="Open Sans" fontSize="12">
        <text x="37" y="615" fill="#3a3ad0">z</text>
        <text x="73" y="651" fill="#e04040">x</text>
      </g>
    </svg>
  )
}

function ModifyBox() {
  return (
    <div className="absolute left-[575px] top-[279px] w-[196px] text-[11px] shadow-[0_6px_16px_rgba(0,0,0,0.45)] bg-white border border-[#888]">
      <div className="h-7" />
      <div className="-mx-[3px] h-9 border-[5px] border-[#00ff00] bg-[#f4f4f4] flex">
        <button aria-label="Save" className="w-[23px] bg-white flex items-center justify-center border-r border-[#bbb]"><Icon name="okGreen" className="w-4 h-4" /></button>
        <button aria-label="Cancel" className="w-7 flex items-center justify-center"><Icon name="cross" className="w-4 h-4" /></button>
        <button aria-label="Rebuild" className="w-[26px] flex items-center justify-center"><Icon name="traffic" /></button>
        <button aria-label="Spin increment" className="w-[27px] flex items-center justify-center"><Icon name="spinInc" /></button>
        <button aria-label="Distance" className="w-7 bg-[#a9a9a9] border border-[#777] flex items-center justify-center"><Icon name="distance" /></button>
      </div>
      <div className="h-5 flex items-center pl-[5px] border-b border-[#999]">D1@Plane3</div>
      <div className="mt-[2px] h-[21px] flex items-center border-t border-[#bbb] pl-px">
        <span>=</span>
        <input aria-label="Dimension equation" defaultValue={'"Thickness"/2'} className="flex-1 min-w-0 text-[#2424c8] outline-none" />
        <Icon name="okBright" />
      </div>
      <button className="w-full h-[18px] flex items-center justify-between pl-[5px] pr-[6px] border-t-2 border-[#888]">
        <span>Units</span>
        <span className="text-[14px] leading-4">&gt;</span>
      </button>
      {/* hover tips */}
      <div className="absolute left-[87px] top-[62px] w-[58px] h-4 flex items-center justify-center bg-white border border-t-0 border-[#888] shadow-[2px_2px_2px_#777] leading-3 text-[#666]">
        Distance
      </div>
      <div className="absolute left-0 -top-[9px] w-[252px] h-8 flex items-center justify-center bg-white border border-[#aaa] font-bold whitespace-nowrap">
        Save the current value and exit the dialog.
      </div>
      <svg className="absolute left-3 top-[22px] w-[14px] h-2" viewBox="0 0 14 8" aria-hidden="true"><path d="M0 0l7 6 7-6" fill="#fff" stroke="#b99" /></svg>
      <svg className="absolute left-[13px] top-[51px] w-[14px] h-[20px]" viewBox="0 0 14 20" aria-hidden="true"><path d="M1 1v15l4-3 3 6 2-1-3-6h6z" fill="#fff" stroke="#222" /></svg>
    </div>
  )
}

function Viewport() {
  return (
    <main className="flex-1 min-w-0 relative bg-white border-l border-[#777]">
      <Scene />
      <div className="relative h-7 pt-[5px] grid grid-cols-[1fr_auto_1fr]">
        <div />
        <div className="flex">
          <BarButton name="zoomFit" label="Zoom to fit" />
          <BarButton name="zoomArea" label="Zoom to area" />
          <BarButton name="prevView" label="Previous view" />
          <BarButton name="section" label="Section view" />
          <BarButton name="orient" label="View orientation" caret />
          <BarButton name="display" label="Display style" caret />
          <BarButton name="eye" label="Hide/show items" caret />
          <BarButton name="appearance" label="Edit appearance" />
          <BarButton name="scene" label="Apply scene" caret />
          <BarButton name="monitor" label="View settings" caret />
        </div>
        <div className="flex justify-end gap-[6px] pr-[10px]">
          {['paneL', 'paneR', 'gMin', 'gRestore', 'gClose'].map((n) => (
            <button key={n} aria-label={n} className="w-5 h-5"><Icon name={n} /></button>
          ))}
        </div>
      </div>
      <div className="relative h-5 flex items-center pl-1 text-[11px]">
        <svg className="w-[5px] h-2" viewBox="0 0 5 8" aria-hidden="true"><path d="M0 0l5 4-5 4z" fill="#222" /></svg>
        <Icon name="part" className="w-[18px] h-[18px] ml-[13px]" />
        <span className="ml-[5px] whitespace-pre">STEP 1  (Default&lt;&lt;Default...</span>
      </div>
      <ModifyBox />
      <button aria-label="Collapse panel" className="absolute left-0 top-[334px] w-2 h-10 bg-[#f6f6f6] border border-l-0 border-[#777] flex items-center justify-center">
        <span className="w-[5px] h-[5px] rounded-full border border-[#888]" />
      </button>
      <div className="absolute right-0 top-[75px] w-[26px] border border-[#999] bg-[#d2d2d2]">
        {['tpHome', 'tpLib', 'tpFolder', 'tpView', 'ball', 'props', 'tpForum', 'tpX', 'tpGlobe'].map((n) => (
          <button key={n} aria-label={n} className={`w-full h-6 flex items-center justify-center border-b border-[#b0a8a8] last:border-b-0 ${n === 'ball' ? 'bg-white' : ''}`}>
            <Icon name={n} className="w-[18px] h-[18px]" />
          </button>
        ))}
      </div>
    </main>
  )
}

function Taskbar() {
  const cell = 'w-12 h-10 shrink-0 relative flex items-center justify-center'
  const bar = 'absolute bottom-0 h-[2px] bg-[#76b0e6]'
  return (
    <footer className="h-10 shrink-0 flex bg-[#24323a] text-white">
      <button aria-label="Start" className="w-12 flex items-center justify-center">
        <svg className="w-4 h-4" viewBox="0 0 16 16" fill="#fff" aria-hidden="true"><path d="M0 2l7-1v6.500H0zM8 1l8-1v7.500H8zM0 8.500h7V15l-7-1zM8 8.500h8V16l-8-1z" /></svg>
      </button>
      <label className="w-[344px] flex items-center bg-[#f2f2f2] border border-[#ccc] pl-[10px]">
        <svg className="w-[18px] h-[18px]" viewBox="0 0 18 18" fill="none" stroke="#222" strokeWidth="1.500" aria-hidden="true"><circle cx="11" cy="7" r="5.500" /><path d="M7 11l-6 6" /></svg>
        <input aria-label="Type here to search" placeholder="Type here to search" className="ml-[11px] flex-1 bg-transparent text-[14px] placeholder:text-[#333] outline-none" />
      </label>
      <div className="flex gap-px">
        <button aria-label="Cortana" className={cell}><span className="w-[15px] h-[15px] rounded-full border-2 border-[#e8eef0]" /></button>
        <button aria-label="Task view" className={cell}>
          <svg className="w-[18px] h-[18px]" viewBox="0 0 18 18" fill="none" stroke="#e8eef0" strokeWidth="1.400" aria-hidden="true"><path d="M2 5h10v8H2zM2 1v2h10V1M2 17v-2h10v2M16 1v4M16 10v7" /><path d="M15 6h2v3h-2z" fill="#fff" /></svg>
        </button>
        <button aria-label="Chrome" className={cell}>
          <svg className="w-[22px] h-[22px]" viewBox="0 0 22 22" aria-hidden="true">
            <circle cx="11" cy="11" r="11" fill="#e9c02c" />
            <path d="M11 11 1.500 5.500A11 11 0 0 1 20.500 5.500z" fill="#d9483b" />
            <path d="M11 11 1.500 5.500a11 11 0 0 0 8 16.400z" fill="#2f9e58" />
            <path d="M11 5.500h9.500L11 11z" fill="#d9483b" />
            <circle cx="11" cy="11" r="5.500" fill="#fff" /><circle cx="11" cy="11" r="4.200" fill="#4a80ea" />
          </svg>
          <span className={`${bar} left-1 right-2`} />
        </button>
        <button aria-label="SOLIDWORKS 2020" className={`${cell} bg-[#4c585a]`}>
          <svg className="w-7 h-7" viewBox="0 0 28 28" fontFamily="Liberation Sans" fontWeight="bold" fill="#fff" aria-hidden="true">
            <path d="M2 5l12-3 12 3v13l-12 6-12-6z" fill="#b3151b" />
            <path d="M2 5l12-3 12 3-12 3z" fill="#d8343a" />
            <path d="M6 17h20v8H6z" fill="#2a1416" />
            <text x="3" y="15" fontSize="11">S</text>
            <text x="14" y="15" fontSize="11">W</text>
            <text x="7" y="25" fontSize="8">2020</text>
          </svg>
          <span className={`${bar} left-0 right-0`} />
        </button>
        <button aria-label="Inkscape" className={cell}>
          <svg className="w-[22px] h-[22px]" viewBox="0 0 22 22" aria-hidden="true"><path d="M11 0l10 10q1 2-1 3l-4 1q4 1 1 2l-2 1q-1 4-4 4t-4-3l-3-2 2-2-4-1q-2-2-1-3z" fill="#0d0d10" /><path d="M11 1l5 5-1 1-2-1-2 3-2-2-2 1-1-2z" fill="#f0f2f6" /><path d="M4 16h5M15 18h3" stroke="#0d0d10" /></svg>
          <span className={`${bar} left-1 right-1`} />
        </button>
        <button aria-label="File Explorer" className={cell}>
          <svg className="w-[22px] h-[22px]" viewBox="0 0 22 22" aria-hidden="true"><path d="M1 2h7l2 2h11v15H1z" fill="#e8b73c" /><path d="M1 6h20v13H1z" fill="#f8d775" /><path d="M5 19v-6h12v6h-3v-3H8v3z" fill="#3c8ede" /></svg>
          <span className={`${bar} left-1 right-1`} />
        </button>
        <button aria-label="Photos" className={cell}>
          <svg className="w-[22px] h-[22px]" viewBox="0 0 22 22" aria-hidden="true"><path d="M0 1h22v20H0z" fill="#3f93e0" /><path d="M0 16l8-9 14 14H0z" fill="#1c4478" /><path d="M11 13l3-2 8 8v2z" fill="#2c66a8" /><circle cx="16" cy="6" r="2" fill="#d8f0ff" /></svg>
          <span className={`${bar} left-1 right-1`} />
        </button>
        <button aria-label="Screen recorder" className={`${cell} bg-[#435052]`}>
          <svg className="w-6 h-[22px]" viewBox="0 0 24 22" aria-hidden="true"><path d="M1 2h21v16H1z" fill="#f3f3ef" /><path d="M3 5h9v10H3z" fill="#4d9484" /><path d="M14 6h6M14 9h6M14 12h4" stroke="#777" /><circle cx="18" cy="16" r="5.500" fill="#fff" /><circle cx="18" cy="16" r="3.200" fill="#d21f3c" /></svg>
          <span className={`${bar} left-0 right-0`} />
        </button>
      </div>
      <div className="ml-auto flex items-center pr-4">
        <svg className="w-[92px] h-5" viewBox="0 0 92 20" fill="none" stroke="#e8eef0" strokeWidth="1.400" aria-hidden="true">
          <path d="M7 13l6-6 6 6" />
          <path d="M33 7h11v7H33zM29 5v3h3V5M30 8v3h3" /><path d="M36 8h7v5h-7z" fill="#fff" />
          <path d="M56 15Q57 6 68 4M59 16q1-7 9-8M62 16q1-4 6-5M65 16l3-2" />
          <path d="M77 8h3l3-3v10l-3-3h-3zM86 8l5 5M91 8l-5 5" />
        </svg>
        <div className="w-[66px] text-center text-[11px] leading-[18px] ml-1">
          <div>4:01 PM</div>
          <div>5/17/2020</div>
        </div>
        <button aria-label="Notifications" className="ml-[10px] mt-1">
          <svg className="w-[26px] h-[26px]" viewBox="0 0 26 26" fontFamily="Open Sans" aria-hidden="true">
            <path d="M0 2h17v12H8l-4 4v-4H0z" fill="#fff" /><path d="M3 5h11M3 8h11M3 11h7" stroke="#24323a" />
            <circle cx="16" cy="17" r="8" fill="#3a444a" stroke="#8c9498" />
            <text x="16" y="21" textAnchor="middle" fontSize="12" fill="#fff">2</text>
          </svg>
        </button>
      </div>
    </footer>
  )
}

export default function App() {
  return (
    <div className="h-screen flex flex-col overflow-hidden bg-[#f6f6f6] text-[#111] font-['Open_Sans',sans-serif]">
      <TitleBar />
      <Ribbon />
      <div className="flex-1 min-h-0 flex">
        <div className="w-[261px] shrink-0 flex flex-col">
          <CommandTabs />
          <div className="flex-1 min-h-0 flex">
            <div className="w-8 shrink-0">
              <div className="mx-[3px] mt-[3px] border-t-2 border-dotted border-[#999]" />
              <div className="flex flex-col items-center gap-[6px] mt-[11px] pb-[11px] border-b border-[#888]">
                {['note1', 'note2', 'note3', 'note4', 'note5', 'note6', 'note7', 'note8'].map((n) => (
                  <button key={n} aria-label={n} className="block"><Icon name={n} /></button>
                ))}
              </div>
            </div>
            <PropertyPanel />
          </div>
        </div>
        <Viewport />
      </div>
      <div className="h-4 shrink-0 flex pl-8 border-b border-[#888] text-[11px] leading-[13px]">
        <div className="w-[27px] border-l border-[#bbb]" />
        {['|◂', '◂', '▸', '▸|'].map((s) => (
          <button key={s} className="w-4 h-[15px] bg-[#ababab] border-r border-t border-[#888] text-[9px] leading-3 text-[#888] font-['DejaVu_Sans']">{s}</button>
        ))}
        <button className="w-[57px] pl-1 font-bold bg-[#f9f9f9]">Model</button>
        <button className="w-[109px] pr-2 bg-[#d4d4d4] border-x border-t border-[#888] leading-3">Motion Study 1</button>
        <div className="flex-1 border-t border-[#888]" />
      </div>
      <div className="h-[18px] shrink-0 flex items-center bg-[#e6e6e6] text-[11px] pl-px pr-1">
        <span className="flex-1">SOLIDWORKS Premium 2020 SP2.0</span>
        <span className="w-[180px]">Editing Part</span>
        <span className="text-[#aaa] w-[53px]">MMGS</span>
        <svg className="w-[6px] h-1" viewBox="0 0 6 4" aria-hidden="true"><path d="M3 0l3 4H0z" fill="#999" /></svg>
        <svg className="w-4 h-4 ml-[26px]" viewBox="0 0 16 16" fill="none" stroke="#444" aria-hidden="true"><path d="M1 6l5-4 9 4v4l-5 4-8-4zM5 6l6 3M6 4l6 3" /></svg>
      </div>
      <Taskbar />
    </div>
  )
}
